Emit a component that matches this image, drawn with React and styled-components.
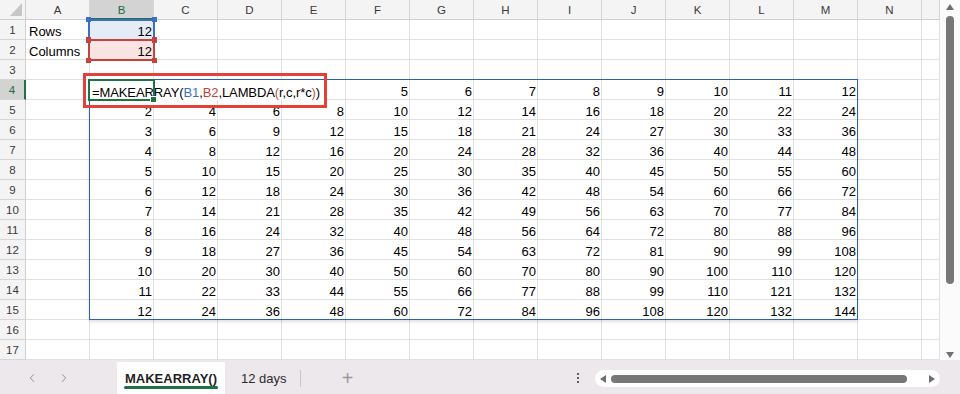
import React from "react";
import styled, { createGlobalStyle } from "styled-components";
import { ChevronLeft, ChevronRight } from "lucide-react";

// Global
const GlobalStyle = createGlobalStyle`
  body {
    margin: 0;
    background: #ece8ec;
    font-family: "Liberation Sans", Arial, sans-serif;
  }
`;

const COLUMNS = ["A", "B", "C", "D", "E", "F", "G", "H", "I", "J", "K", "L", "M", "N"];
const ROW_COUNT = 17;

// Window
const Window = styled.div`
  width: 960px;
  height: 394px;
  display: flex;
  flex-direction: column;
  background: #ece8ec;
  overflow: hidden;
`;

const Workspace = styled.div`
  display: flex;
  height: 360px;
  background: #fff;
`;

const Sheet = styled.div`
  position: relative;
  width: 940px;
  display: grid;
  grid-template-columns: 26px repeat(14, 64px) 1fr;
  grid-auto-rows: 20px;
  overflow: hidden;
`;

const Cell = styled.div`
  box-sizing: border-box;
  border-right: 1px solid #e1e1e1;
  border-bottom: 1px solid #e1e1e1;
  display: flex;
  align-items: flex-end;
  justify-content: ${(p) => (p.$num ? "flex-end" : "flex-start")};
  padding: 0 1px 0 3px;
  font-size: 13px;
  color: #000;
  background: ${(p) => p.$bg || "#fff"};
  white-space: nowrap;
  overflow: hidden;
`;

const ColHead = styled.div`
  box-sizing: border-box;
  display: flex;
  align-items: center;
  justify-content: center;
  font-size: 11.5px;
  padding-top: 1px;
  color: ${(p) => (p.$active ? "#1d6b40" : "#3a3a3a")};
  background: ${(p) => (p.$active ? "#d3d3d3" : "#f4f4f4")};
  border-right: 1px solid #d6d6d6;
  border-bottom: ${(p) => (p.$active ? "2px solid #1e7145" : "1px solid #cfcfcf")};
`;

const RowHead = styled.div`
  box-sizing: border-box;
  display: flex;
  align-items: center;
  justify-content: center;
  font-size: 11.5px;
  padding-top: 1px;
  color: ${(p) => (p.$active ? "#1d6b40" : "#3a3a3a")};
  background: ${(p) => (p.$active ? "#d3d3d3" : "#f4f4f4")};
  border-bottom: 1px solid #d6d6d6;
  border-right: ${(p) => (p.$active ? "2px solid #1e7145" : "1px solid #cfcfcf")};
`;

const Corner = styled.div`
  box-sizing: border-box;
  background: #f4f4f4;
  border-right: 1px solid #cfcfcf;
  border-bottom: 1px solid #cfcfcf;
  display: flex;
  align-items: flex-end;
  justify-content: flex-end;
  padding: 0 3px 3px 0;
`;

// Overlays on the grid
const SpillRange = styled.div`
  position: absolute;
  left: 89px;
  top: 79px;
  width: 769px;
  height: 241px;
  box-sizing: border-box;
  border: 1px solid #2f5fb3;
  box-shadow: 0 2px 3px rgba(0, 0, 0, 0.12);
  pointer-events: none;
`;

const RefBox = styled.div`
  position: absolute;
  left: 88px;
  top: ${(p) => p.$top}px;
  width: 67px;
  height: 22px;
  box-sizing: border-box;
  border: 2px solid ${(p) => p.$color};
`;

const Handle = styled.span`
  position: absolute;
  width: 5px;
  height: 5px;
  background: ${(p) => p.$color};
  ${(p) => (p.$v === "t" ? "top: -4px;" : "bottom: -4px;")}
  ${(p) => (p.$h === "l" ? "left: -4px;" : "right: -4px;")}
`;

const Editor = styled.div`
  position: absolute;
  left: 90px;
  top: 80px;
  height: 20px;
  padding: 0 4px 0 2px;
  background: #fff;
  display: flex;
  align-items: flex-end;
  font-size: 13px;
  letter-spacing: -0.1px;
  color: #000;
  white-space: nowrap;
`;

const Ref = styled.span`
  color: ${(p) => p.$color};
`;

const ActiveCell = styled.div`
  position: absolute;
  left: 88px;
  top: 79px;
  width: 67px;
  height: 22px;
  box-sizing: border-box;
  border: 2px solid #1e7145;

  &::after {
    content: "";
    position: absolute;
    right: -4px;
    bottom: -4px;
    width: 5px;
    height: 5px;
    background: #1e7145;
    border: 1px solid #fff;
  }
`;

const Callout = styled.div`
  position: absolute;
  left: 83px;
  top: 73px;
  width: 244px;
  height: 35px;
  box-sizing: border-box;
  border: 3px solid #e2413a;
  pointer-events: none;
`;

// Vertical scroll bar
const VScroll = styled.div`
  width: 20px;
  display: flex;
  flex-direction: column;
  align-items: center;
  padding: 4px 0 2px;
  box-sizing: border-box;
  background: #fbfbfb;
  border-bottom-left-radius: 6px;
`;

const Thumb = styled.div`
  background: #777;
  border-radius: 4px;
  width: ${(p) => p.$w}px;
  height: ${(p) => p.$h}px;
  margin-left: ${(p) => p.$offset || 0}px;
`;

const VTrack = styled.div`
  flex: 1;
  display: flex;
  flex-direction: column;
  padding-top: 6px;
`;

// Tab bar
const TabBar = styled.div`
  flex: 1;
  display: flex;
  align-items: stretch;
  font-size: 13px;
  color: #242424;
`;

const NavGroup = styled.div`
  width: 117px;
  box-sizing: border-box;
  padding-left: 16px;
  display: flex;
`;

const NavButton = styled.div`
  width: 32px;
  display: flex;
  align-items: center;
  justify-content: center;
  color: #8a8a8a;
  padding-top: 2px;
`;

const SheetTab = styled.div`
  position: relative;
  display: flex;
  align-items: center;
  margin-top: 2px;
  padding: ${(p) => (p.$active ? "0 8px" : "0 13px 0 16px")};
  background: ${(p) => (p.$active ? "#fff" : "transparent")};
  font-weight: ${(p) => (p.$active ? 700 : 400)};
  color: ${(p) => (p.$active ? "#1f1f1f" : "#2b2b2b")};

  &::after {
    content: "";
    display: ${(p) => (p.$active ? "block" : "none")};
    position: absolute;
    left: 7px;
    right: 7px;
    bottom: 5px;
    height: 3px;
    border-radius: 2px;
    background: #1e7145;
  }
`;

const TabDivider = styled.div`
  width: 1px;
  margin: 10px 0 7px;
  background: #c9c5c9;
`;

const AddButton = styled.div`
  margin-left: 40px;
  width: 14px;
  display: flex;
  align-items: center;
  justify-content: center;
  color: #9a9a9a;
  font-size: 20px;
  font-weight: 300;
  padding-top: 2px;
`;

const Spacer = styled.div`
  flex: 1;
`;

const MoreDots = styled.div`
  width: 10px;
  margin-right: 12px;
  display: flex;
  flex-direction: column;
  align-items: center;
  justify-content: center;
  gap: 2px;
  padding-top: 2px;

  span {
    width: 2px;
    height: 2px;
    background: #333;
    border-radius: 1px;
  }
`;

const HScroll = styled.div`
  width: 345px;
  height: 17px;
  margin: 10px 20px 0 0;
  box-sizing: border-box;
  padding: 0 5px;
  background: #fff;
  border-radius: 9px;
  display: flex;
  align-items: center;
`;

const Arrow = ({ dir }) => {
  const pts = {
    up: "0,6 4,0 8,6",
    down: "0,0 8,0 4,6",
    left: "6,0 6,8 0,4",
    right: "0,0 6,4 0,8",
  }[dir];
  const vertical = dir === "up" || dir === "down";
  return (
    <svg width={vertical ? 8 : 6} height={vertical ? 6 : 8} viewBox={vertical ? "0 0 8 6" : "0 0 6 8"}>
      <polygon points={pts} fill="#6f6f6f" />
    </svg>
  );
};

// The editor text lies over B4:E4, so those spilled values stay hidden
const cellValue = (row, col) => {
  if (row === 1 && col === 0) return { text: "Rows" };
  if (row === 2 && col === 0) return { text: "Columns" };
  if ((row === 1 || row === 2) && col === 1) return { text: 12, num: true };
  if (row === 4 && col <= 4) return { text: "" };
  if (row >= 4 && row <= 15 && col >= 1 && col <= 12) {
    return { text: (row - 3) * col, num: true };
  }
  return { text: "" };
};

const cellBg = (row, col) => {
  if (col !== 1) return undefined;
  if (row === 1) return "#e4ecf8";
  if (row === 2) return "#f9e4e4";
  return undefined;
};

const Corners = ({ color }) =>
  ["tl", "tr", "bl", "br"].map((c) => (
    <Handle key={c} $v={c[0]} $h={c[1]} $color={color} />
  ));

const App = () => {
  const rows = Array.from({ length: ROW_COUNT }, (_, i) => i + 1);

  return (
    <Window>
      <GlobalStyle />
      <Workspace>
        <Sheet>
          <Corner>
            <svg width="12" height="13" viewBox="0 0 12 13">
              <polygon points="12,0 12,13 0,13" fill="#c6c6c6" />
            </svg>
          </Corner>
          {COLUMNS.map((c) => (
            <ColHead key={c} $active={c === "B"}>{c}</ColHead>
          ))}
          <ColHead />

          {rows.map((r) => (
            <React.Fragment key={r}>
              <RowHead $active={r === 4}>{r}</RowHead>
              {COLUMNS.map((c, ci) => {
                const v = cellValue(r, ci);
                return (
                  <Cell key={c} $num={v.num} $bg={cellBg(r, ci)}>
                    {v.text}
                  </Cell>
                );
              })}
              <Cell />
            </React.Fragment>
          ))}

          <SpillRange />
          <RefBox $top={19} $color="#3b6fc6">
            <Corners color="#3b6fc6" />
          </RefBox>
          <RefBox $top={39} $color="#c8413b">
            <Corners color="#c8413b" />
          </RefBox>
          <Editor>
            =MAKEARRAY(<Ref $color="#3b6fc6">B1</Ref>,<Ref $color="#c8413b">B2</Ref>,LAMBDA
            <Ref $color="#c0504d">(</Ref>r,c,r*c<Ref $color="#c0504d">)</Ref>)
          </Editor>
          <ActiveCell />
          <Callout />
        </Sheet>

        <VScroll>
          <Arrow dir="up" />
          <VTrack>
            <Thumb $w={8} $h={268} />
          </VTrack>
          <Arrow dir="down" />
        </VScroll>
      </Workspace>

      <TabBar>
        <NavGroup>
          <NavButton><ChevronLeft size={14} strokeWidth={1.6} /></NavButton>
          <NavButton><ChevronRight size={14} strokeWidth={1.6} /></NavButton>
        </NavGroup>
        <SheetTab $active>MAKEARRAY()</SheetTab>
        <SheetTab>12 days</SheetTab>
        <TabDivider />
        <AddButton>+</AddButton>
        <Spacer />
        <MoreDots>
          <span />
          <span />
          <span />
        </MoreDots>
        <HScroll>
          <Arrow dir="left" />
          <Thumb $w={296} $h={8} $offset={5} />
          <Spacer />
          <Arrow dir="right" />
        </HScroll>
      </TabBar>
    </Window>
  );
};

export default App;
